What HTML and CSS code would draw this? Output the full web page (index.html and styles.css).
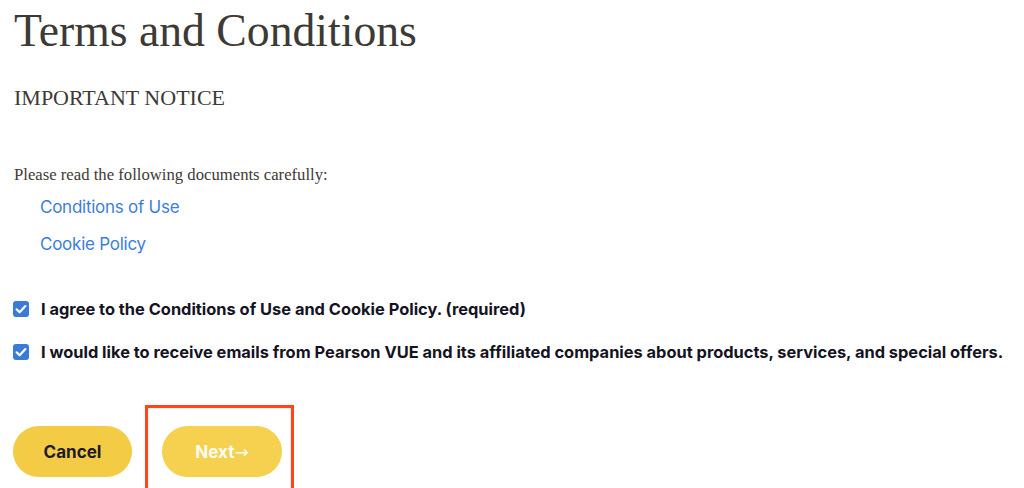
FILE: index.html
```html
<!DOCTYPE html>
<html>
<head>
<meta charset="utf-8">
<link rel="stylesheet" href="styles.css">
</head>
<body>
<main class="page">
  <h1 class="title">Terms and Conditions</h1>
  <h2 class="notice">IMPORTANT NOTICE</h2>
  <p class="intro">Please read the following documents carefully:</p>
  <ul class="links">
    <li><a href="#">Conditions of Use</a></li>
    <li><a href="#">Cookie Policy</a></li>
  </ul>
  <div class="checks">
    <label class="check"><span class="box"><svg viewBox="0 0 16 16" width="16" height="16"><path d="M3.6 8.3l3 3 5.8-6.2" fill="none" stroke="#fff" stroke-width="2.2" stroke-linecap="round" stroke-linejoin="round"/></svg></span>I agree to the Conditions of Use and Cookie Policy. (required)</label>
    <label class="check"><span class="box"><svg viewBox="0 0 16 16" width="16" height="16"><path d="M3.6 8.3l3 3 5.8-6.2" fill="none" stroke="#fff" stroke-width="2.2" stroke-linecap="round" stroke-linejoin="round"/></svg></span>I would like to receive emails from Pearson VUE and its affiliated companies about products, services, and special offers.</label>
  </div>
  <div class="actions">
    <button class="btn">Cancel</button>
    <div class="highlight">
      <button class="btn btn-next">Next<span class="arrow">→</span></button>
    </div>
  </div>
</main>
</body>
</html>
```
FILE: styles.css
```css
* { box-sizing: border-box; }
html, body { margin: 0; padding: 0; background: #fff; overflow: hidden; }
.page {
  padding: 0 0 0 14px;
  height: 488px;
}
.title {
  font-family: "Liberation Serif", "Times New Roman", serif;
  font-weight: normal;
  font-size: 45.7px;
  line-height: 52px;
  color: #3d3a35;
  margin: 5px 0 0 0;
}
.notice {
  font-family: "Liberation Serif", serif;
  font-weight: normal;
  font-size: 22px;
  line-height: 24px;
  color: #3d3a35;
  margin: 29px 0 0 0;
}
.intro {
  font-family: "Liberation Serif", serif;
  font-size: 16.7px;
  line-height: 20px;
  color: #3d3a35;
  margin: 55px 0 0 0;
}
.links {
  list-style: none;
  margin: 10px 0 0 26px;
  padding: 0;
  display: flex;
  flex-direction: column;
  gap: 13px;
}
.links a {
  font-family: Inter, "Noto Sans", sans-serif;
  font-size: 17px;
  line-height: 24px;
  letter-spacing: -0.25px;
  color: #3a7ee0;
  text-decoration: none;
}
.checks {
  margin: 43px 0 0 -1px;
  display: flex;
  flex-direction: column;
  gap: 23px;
}
.check {
  display: flex;
  align-items: center;
  gap: 12px;
  font-family: Inter, "Noto Sans", sans-serif;
  font-weight: 700;
  font-size: 16.4px;
  line-height: 20px;
  color: #15131f;
}
.box {
  width: 16px;
  height: 16px;
  border-radius: 3px;
  background: #3a7bd8;
  display: flex;
  flex: none;
}
.actions {
  margin: 43px 0 0 -1px;
  display: flex;
  align-items: flex-start;
  gap: 13px;
}
.btn {
  width: 119px;
  height: 51px;
  margin-top: 21px;
  border: none;
  border-radius: 26px;
  background: #f4cb45;
  font-family: Inter, "Noto Sans", sans-serif;
  font-weight: 700;
  font-size: 17px;
  color: #1c1a2c;
  cursor: pointer;
}
.highlight {
  border: 3px solid #ff4619;
  box-shadow: inset 0 0 3px rgba(0,0,0,0.15);
  padding: 0 9px 0 14px;
  height: 90px;
}
.btn-next {
  width: 120px;
  margin-top: 18px;
  background: #f6d04f;
  color: #fffdf3;
}
.arrow {
  font-family: "DejaVu Sans", sans-serif;
  font-weight: normal;
  font-size: 17px;
}
```
